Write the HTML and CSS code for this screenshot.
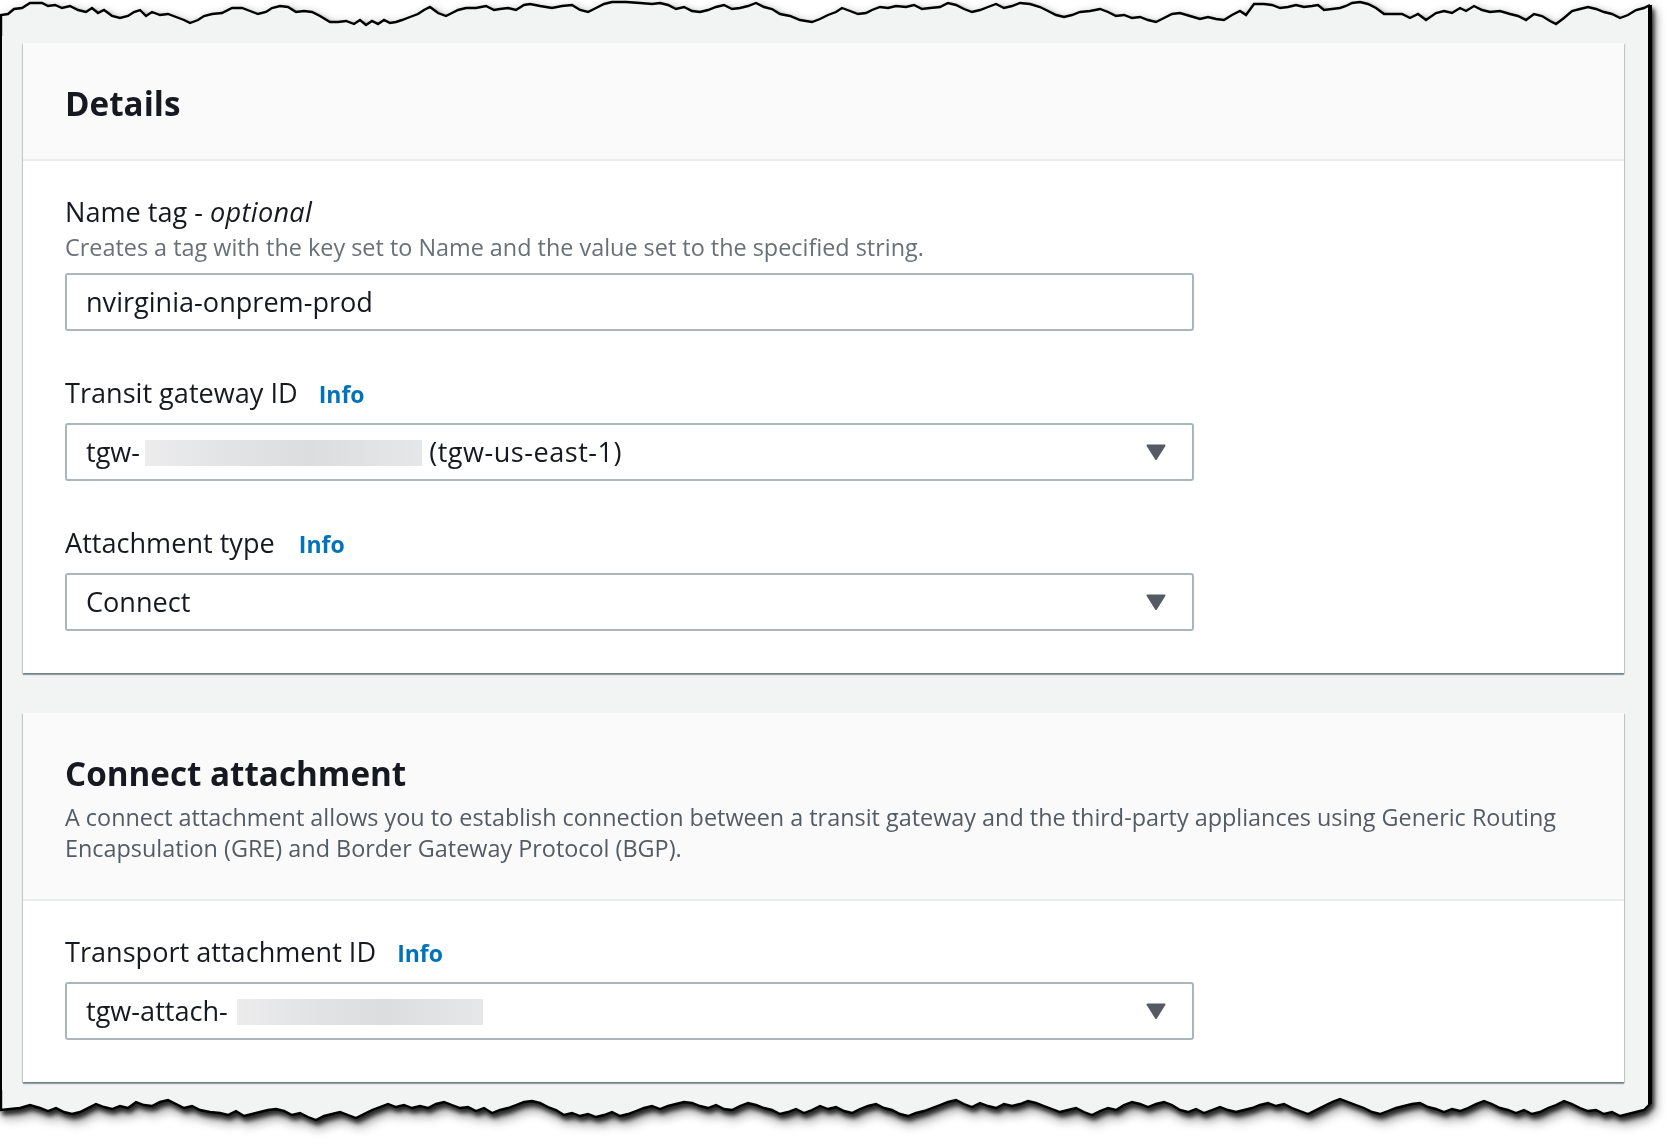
FILE: index.html
```html
<!DOCTYPE html>
<html lang="en">
<head>
<meta charset="utf-8">
<title>Create transit gateway attachment</title>
<link rel="stylesheet" href="styles.css">
</head>
<body>
<div class="page">
  <svg class="edge edge-top" width="1652" height="36" viewBox="0 0 1652 36" aria-hidden="true">
    <path class="edge-fill" d="M0,36 L0,15 L8,14 14,9 22,8 30,3 42,3 48,6 55,5 62,8 70,6 78,10 86,12 92,8 98,13 104,10 112,16 120,18 128,16 134,12 140,10 146,16 152,12 160,15 168,14 176,17 184,20 190,23 198,20 204,16 212,14 222,13 232,8 242,8 250,11 258,14 266,12 272,8 280,6 288,7 296,12 304,11 312,12 320,16 330,22 338,22 346,21 354,24 360,20 366,25 372,21 378,24 384,20 390,23 396,22 402,20 410,17 418,14 424,10 430,7 438,13 446,16 452,13 458,10 466,8 476,8 486,6 494,10 500,9 508,8 516,10 524,5 530,4 540,6 552,8 562,6 572,5 580,10 588,12 596,8 604,4 612,2 626,2 640,3 652,4 660,3 668,5 676,9 684,7 692,11 700,12 708,10 716,7 724,5 732,9 740,8 748,6 756,3 764,7 772,9 780,14 790,16 800,20 812,22 820,19 828,15 836,12 842,8 850,11 858,14 866,13 872,10 880,7 888,8 896,6 906,7 914,5 922,9 930,8 940,7 948,3 956,5 964,9 972,12 980,10 988,7 996,4 1004,8 1012,6 1020,3 1030,4 1040,7 1048,11 1056,15 1064,17 1072,15 1080,12 1090,11 1100,9 1108,12 1116,16 1124,15 1132,18 1140,17 1148,20 1156,22 1164,18 1172,14 1180,13 1190,16 1200,19 1208,17 1216,19 1224,20 1232,15 1240,11 1246,15 1254,4 1264,4 1272,5 1280,8 1288,7 1296,5 1304,7 1312,6 1318,5 1324,10 1332,9 1340,8 1346,6 1352,3 1360,2 1368,4 1376,8 1384,14 1394,14 1402,14 1410,18 1418,14 1426,20 1436,13 1444,11 1452,13 1460,8 1466,11 1474,6 1482,10 1490,12 1500,11 1510,14 1518,16 1526,20 1534,14 1542,16 1550,21 1556,24 1564,18 1572,11 1580,9 1588,7 1596,9 1604,12 1612,14 1620,18 1628,15 1636,10 1644,8 1652,5 L1652,36 Z"/>
    <path class="edge-line" d="M1,36 L1,15 L8,14 14,9 22,8 30,3 42,3 48,6 55,5 62,8 70,6 78,10 86,12 92,8 98,13 104,10 112,16 120,18 128,16 134,12 140,10 146,16 152,12 160,15 168,14 176,17 184,20 190,23 198,20 204,16 212,14 222,13 232,8 242,8 250,11 258,14 266,12 272,8 280,6 288,7 296,12 304,11 312,12 320,16 330,22 338,22 346,21 354,24 360,20 366,25 372,21 378,24 384,20 390,23 396,22 402,20 410,17 418,14 424,10 430,7 438,13 446,16 452,13 458,10 466,8 476,8 486,6 494,10 500,9 508,8 516,10 524,5 530,4 540,6 552,8 562,6 572,5 580,10 588,12 596,8 604,4 612,2 626,2 640,3 652,4 660,3 668,5 676,9 684,7 692,11 700,12 708,10 716,7 724,5 732,9 740,8 748,6 756,3 764,7 772,9 780,14 790,16 800,20 812,22 820,19 828,15 836,12 842,8 850,11 858,14 866,13 872,10 880,7 888,8 896,6 906,7 914,5 922,9 930,8 940,7 948,3 956,5 964,9 972,12 980,10 988,7 996,4 1004,8 1012,6 1020,3 1030,4 1040,7 1048,11 1056,15 1064,17 1072,15 1080,12 1090,11 1100,9 1108,12 1116,16 1124,15 1132,18 1140,17 1148,20 1156,22 1164,18 1172,14 1180,13 1190,16 1200,19 1208,17 1216,19 1224,20 1232,15 1240,11 1246,15 1254,4 1264,4 1272,5 1280,8 1288,7 1296,5 1304,7 1312,6 1318,5 1324,10 1332,9 1340,8 1346,6 1352,3 1360,2 1368,4 1376,8 1384,14 1394,14 1402,14 1410,18 1418,14 1426,20 1436,13 1444,11 1452,13 1460,8 1466,11 1474,6 1482,10 1490,12 1500,11 1510,14 1518,16 1526,20 1534,14 1542,16 1550,21 1556,24 1564,18 1572,11 1580,9 1588,7 1596,9 1604,12 1612,14 1620,18 1628,15 1636,10 1644,8 1650,5"/>
    <path class="edge-side" d="M1650,5 L1650,36"/>
  </svg>

  <main class="sheet">
    <section class="card">
      <header class="card-header">
        <h2 class="card-title">Details</h2>
      </header>
      <div class="card-body">
        <div class="field">
          <div class="label">Name tag - <em>optional</em></div>
          <div class="hint">Creates a tag with the key set to Name and the value set to the specified string.</div>
          <div class="control control-input">nvirginia-onprem-prod</div>
        </div>
        <div class="field">
          <div class="label">Transit gateway ID <a class="info" href="#">Info</a></div>
          <div class="control control-select">
            <span class="value">tgw-<span class="redact redact-gw"></span> <span class="value-tail">(tgw-us-east-1)</span></span>
            <svg class="caret" width="20" height="16" viewBox="0 0 20 16" aria-hidden="true"><path d="M1.5,1.5 L18.5,1.5 L10,15 Z"/></svg>
          </div>
        </div>
        <div class="field">
          <div class="label">Attachment type <a class="info info-wide" href="#">Info</a></div>
          <div class="control control-select">
            <span class="value">Connect</span>
            <svg class="caret" width="20" height="16" viewBox="0 0 20 16" aria-hidden="true"><path d="M1.5,1.5 L18.5,1.5 L10,15 Z"/></svg>
          </div>
        </div>
      </div>
    </section>

    <section class="card">
      <header class="card-header">
        <h2 class="card-title">Connect attachment</h2>
        <p class="card-desc">A connect attachment allows you to establish connection between a transit gateway and the third-party appliances using Generic Routing Encapsulation (GRE) and Border Gateway Protocol (BGP).</p>
      </header>
      <div class="card-body">
        <div class="field">
          <div class="label">Transport attachment ID <a class="info" href="#">Info</a></div>
          <div class="control control-select">
            <span class="value">tgw-attach-<span class="redact redact-attach"></span></span>
            <svg class="caret" width="20" height="16" viewBox="0 0 20 16" aria-hidden="true"><path d="M1.5,1.5 L18.5,1.5 L10,15 Z"/></svg>
          </div>
        </div>
      </div>
    </section>
  </main>

  <svg class="edge edge-bottom" width="1652" height="56" viewBox="0 0 1652 56" aria-hidden="true">
    <path class="edge-fill" d="M0,0 L1652,0 L1652,14 L1650,14 1644,20 1636,22 1628,24 1620,26 1612,22 1604,24 1596,20 1588,21 1580,18 1572,14 1564,11 1556,15 1548,18 1540,22 1532,24 1524,20 1516,23 1508,20 1500,18 1492,14 1484,11 1476,14 1468,18 1460,21 1452,19 1444,22 1436,19 1428,17 1420,13 1412,14 1404,16 1396,18 1388,21 1380,24 1372,22 1364,18 1356,15 1348,12 1340,9 1332,12 1324,16 1316,20 1308,24 1300,21 1292,18 1284,14 1276,16 1268,13 1260,15 1252,18 1244,20 1236,22 1228,20 1220,17 1212,20 1204,23 1196,19 1188,22 1180,20 1172,15 1164,12 1156,14 1148,17 1140,14 1132,12 1124,15 1116,20 1108,18 1100,21 1092,25 1084,22 1076,18 1068,20 1060,22 1052,19 1044,16 1036,13 1028,11 1020,14 1012,16 1004,14 996,18 988,16 980,13 972,17 964,14 956,10 948,12 940,15 932,18 924,21 916,23 908,26 900,24 892,20 884,18 876,14 868,16 860,19 852,23 844,21 836,17 828,19 820,16 812,20 804,23 796,19 788,22 780,24 772,20 764,18 756,15 748,13 740,16 732,20 724,19 716,15 708,18 700,16 692,13 684,12 676,14 668,16 660,19 652,16 644,18 636,21 628,24 620,26 612,22 604,25 596,27 588,24 580,26 572,23 564,25 556,20 548,17 540,13 532,11 524,12 516,15 508,18 500,20 492,23 484,18 476,21 468,17 460,18 452,15 444,12 436,14 428,18 420,16 412,18 404,15 396,17 388,14 380,17 372,20 364,24 356,28 348,25 340,22 332,24 324,26 316,30 308,27 300,23 292,25 284,21 276,19 268,20 260,22 252,24 244,26 236,21 228,25 220,23 210,22 200,20 192,16 184,18 176,14 168,10 160,12 152,16 144,15 136,12 128,18 120,16 112,19 104,17 96,14 88,18 80,22 72,24 64,22 56,18 48,21 40,18 30,15 20,18 10,19 0,20 Z"/>
    <path class="edge-line" d="M1,0 L1,20 L10,19 20,18 30,15 40,18 48,21 56,18 64,22 72,24 80,22 88,18 96,14 104,17 112,19 120,16 128,18 136,12 144,15 152,16 160,12 168,10 176,14 184,18 192,16 200,20 210,22 220,23 228,25 236,21 244,26 252,24 260,22 268,20 276,19 284,21 292,25 300,23 308,27 316,30 324,26 332,24 340,22 348,25 356,28 364,24 372,20 380,17 388,14 396,17 404,15 412,18 420,16 428,18 436,14 444,12 452,15 460,18 468,17 476,21 484,18 492,23 500,20 508,18 516,15 524,12 532,11 540,13 548,17 556,20 564,25 572,23 580,26 588,24 596,27 604,25 612,22 620,26 628,24 636,21 644,18 652,16 660,19 668,16 676,14 684,12 692,13 700,16 708,18 716,15 724,19 732,20 740,16 748,13 756,15 764,18 772,20 780,24 788,22 796,19 804,23 812,20 820,16 828,19 836,17 844,21 852,23 860,19 868,16 876,14 884,18 892,20 900,24 908,26 916,23 924,21 932,18 940,15 948,12 956,10 964,14 972,17 980,13 988,16 996,18 1004,14 1012,16 1020,14 1028,11 1036,13 1044,16 1052,19 1060,22 1068,20 1076,18 1084,22 1092,25 1100,21 1108,18 1116,20 1124,15 1132,12 1140,14 1148,17 1156,14 1164,12 1172,15 1180,20 1188,22 1196,19 1204,23 1212,20 1220,17 1228,20 1236,22 1244,20 1252,18 1260,15 1268,13 1276,16 1284,14 1292,18 1300,21 1308,24 1316,20 1324,16 1332,12 1340,9 1348,12 1356,15 1364,18 1372,22 1380,24 1388,21 1396,18 1404,16 1412,14 1420,13 1428,17 1436,19 1444,22 1452,19 1460,21 1468,18 1476,14 1484,11 1492,14 1500,18 1508,20 1516,23 1524,20 1532,24 1540,22 1548,18 1556,15 1564,11 1572,14 1580,18 1588,21 1596,20 1604,24 1612,22 1620,26 1628,24 1636,22 1644,20 1650,14"/>
    <path class="edge-side" d="M1650,0 L1650,14"/>
  </svg>
</div>
</body>
</html>
```
FILE: styles.css
```css
* { box-sizing: border-box; }

html, body {
  margin: 0;
  padding: 0;
  background: #ffffff;
}

body {
  font-family: "Open Sans", "Noto Sans", sans-serif;
  color: #16191f;
}

.page {
  width: 1652px;
  display: flex;
  flex-direction: column;
  filter: drop-shadow(2px 4px 2px rgba(0, 0, 0, 0.75)) drop-shadow(2px 4px 5px rgba(0, 0, 0, 0.45));
}

.edge { display: block; }
.edge-fill { fill: #f2f3f3; }
.edge-line {
  fill: none;
  stroke: #000;
  stroke-width: 2.4;
  stroke-linejoin: miter;
}
.edge-side {
  fill: none;
  stroke: #000;
  stroke-width: 4;
}

.sheet {
  background: #f2f3f3;
  border-left: 2px solid #000;
  border-right: 4px solid #000;
  padding: 7px 24px 8px 21px;
  display: flex;
  flex-direction: column;
  gap: 40px;
}

.card {
  background: #ffffff;
  box-shadow: 0 2px 1px 0 rgba(0, 28, 36, 0.35),
              1px 1px 1px 0 rgba(0, 28, 36, 0.15),
              -1px 1px 1px 0 rgba(0, 28, 36, 0.15);
}

.card-header {
  background: #fafafa;
  border-bottom: 2px solid #eaeded;
  padding: 41px 42px 35px;
}

.card-title {
  margin: 0;
  font-size: 33.2px;
  line-height: 40px;
  font-weight: 700;
  color: #16191f;
}

.card-desc {
  margin: 8px 0 0;
  font-size: 23.4px;
  line-height: 31px;
  color: #545b64;
}

.card-body {
  padding: 38px 42px 42px;
  display: flex;
  flex-direction: column;
  gap: 49px;
}

.field {
  display: flex;
  flex-direction: column;
  max-width: 1129px;
}

.label {
  font-size: 27.1px;
  line-height: 26px;
  color: #16191f;
  white-space: nowrap;
}

.label em { font-style: italic; letter-spacing: 0.3px; }

.info {
  margin-left: 14px;
  font-size: 23px;
  font-weight: 700;
  color: #0073bb;
  text-decoration: none;
}

.info-wide { margin-left: 17px; }

.hint {
  margin-top: 10px;
  font-size: 23.4px;
  line-height: 24px;
  color: #687078;
}

.control {
  height: 58px;
  margin-top: 16px;
  border: 2px solid #aab7b8;
  border-radius: 3px;
  background: #ffffff;
  font-size: 27.1px;
  line-height: 54px;
  color: #16191f;
  padding: 0 26px 0 19px;
  white-space: nowrap;
}

.control-input { margin-top: 14px; }

.control-select {
  display: flex;
  align-items: center;
  justify-content: space-between;
}

.value-tail { letter-spacing: 0.5px; }

.caret { display: block; }
.caret path {
  fill: #545b64;
  stroke: #545b64;
  stroke-width: 2;
  stroke-linejoin: round;
}

.redact {
  display: inline-block;
  height: 26px;
  vertical-align: -4px;
  background: linear-gradient(90deg, #ececed 0%, #e1e2e4 35%, #dcdddf 60%, #e6e7e8 100%);
  filter: blur(0.6px);
}
.redact-gw { width: 277px; margin-left: 5px; }
.redact-attach { width: 246px; margin-left: 9px; }
```
